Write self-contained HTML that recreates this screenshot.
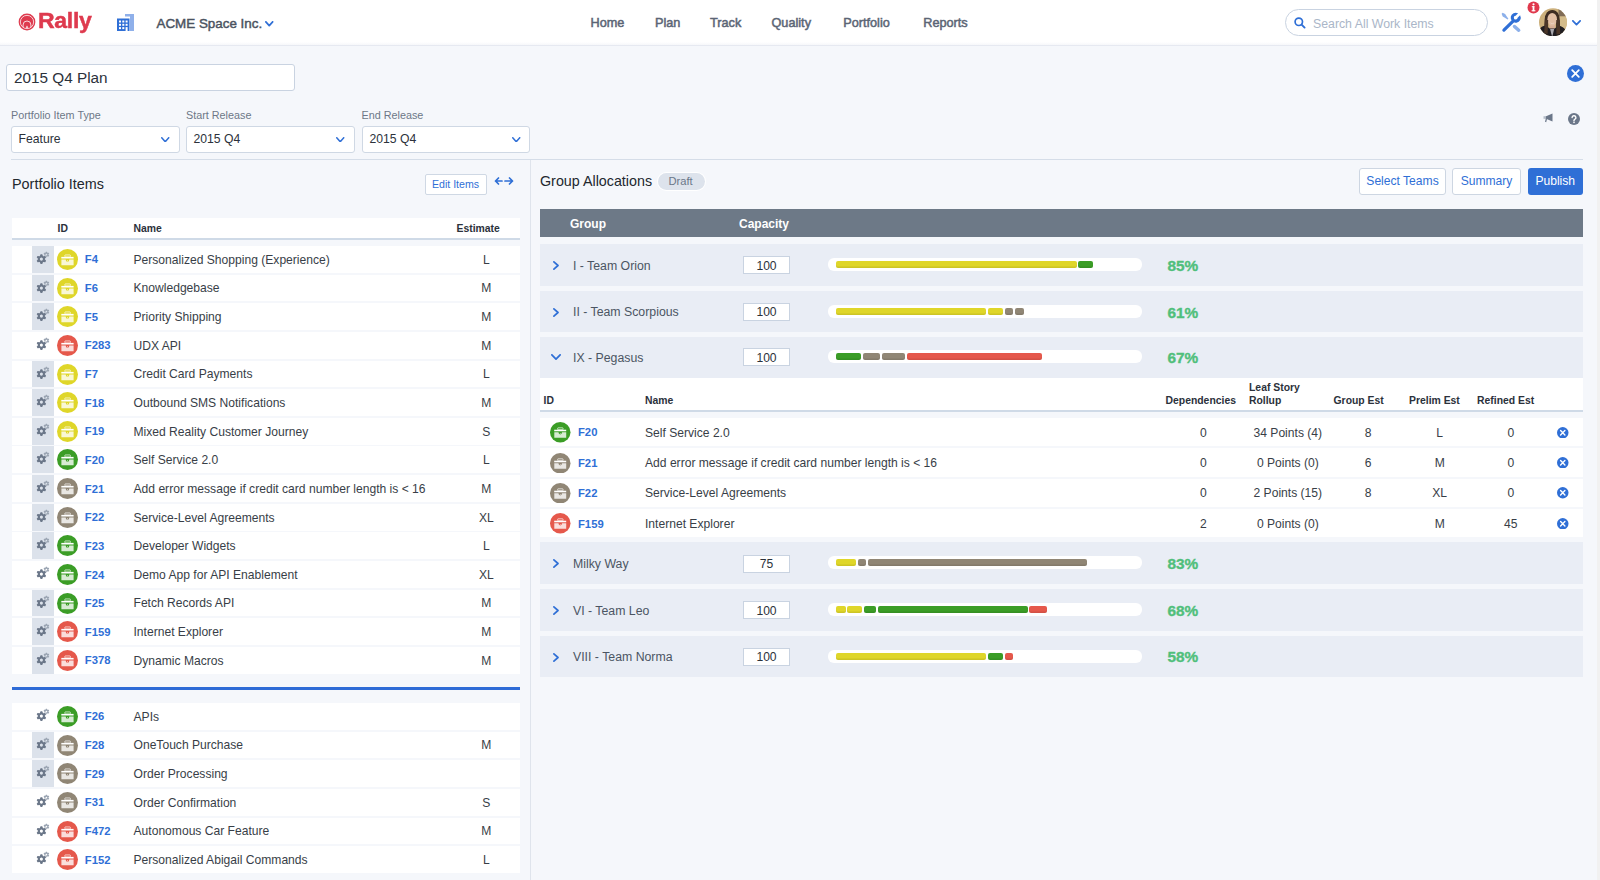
<!DOCTYPE html>
<html><head><meta charset="utf-8"><title>Rally</title>
<style>
html,body{margin:0;padding:0;width:1600px;height:880px;overflow:hidden;background:#f5f7fb;font-family:"Liberation Sans", sans-serif;}
.t{position:absolute;white-space:nowrap;}
</style></head><body>
<div style="position:absolute;left:0px;top:0px;width:1597px;height:45px;background:#ffffff;"></div><div style="position:absolute;left:0px;top:42px;width:1597px;height:3px;background:linear-gradient(#ffffff,#f6f7fa);"></div><div style="position:absolute;left:0px;top:45px;width:1597px;height:1px;background:#e6e9f1;"></div><div style="position:absolute;left:1597px;top:0px;width:3px;height:880px;background:#f1f1f1;"></div><svg style="position:absolute;left:18px;top:12.5px;" width="18" height="18" viewBox="0 0 18 18"><circle cx="9" cy="9" r="8.4" fill="#de3a4e"/><circle cx="9" cy="9" r="6.65" fill="none" stroke="#fff" stroke-width="0.75"/><path d="M3.4 12.2 A5.9 5.9 0 0 1 14.6 12.2 L12.9 13.6 A4.2 4.2 0 0 0 5.1 13.6 Z" fill="#fff" opacity="0"/><path d="M5.1 14.2 L5.1 11.9 A3.9 3.9 0 0 1 12.9 11.9 L12.9 14.2" fill="none" stroke="#fff" stroke-width="0.8"/><path d="M7.8 14.8 L9 12.4 L10.2 14.8 Z" fill="#fff"/></svg><div class="t" style="left:37.6px;top:8.4px;font-size:22.6px;line-height:26px;color:#de3a4e;font-weight:700;-webkit-text-stroke:0.5px #de3a4e;transform-origin:0 0;transform:scaleX(1.02);letter-spacing:-0.3px">Rally</div><svg style="position:absolute;left:117px;top:14px;" width="18" height="18" viewBox="0 0 18 18"><rect x="13" y="0" width="4" height="17" fill="#8fb0ea"/><rect x="8" y="0" width="9" height="2.5" fill="#8fb0ea"/><rect x="0" y="4.5" width="12.5" height="12.5" fill="#2f6fd6"/><g fill="#fff"><rect x="2" y="6.5" width="2" height="2"/><rect x="5.3" y="6.5" width="2" height="2"/><rect x="8.6" y="6.5" width="2" height="2"/><rect x="2" y="9.8" width="2" height="2"/><rect x="5.3" y="9.8" width="2" height="2"/><rect x="8.6" y="9.8" width="2" height="2"/><rect x="2" y="13.1" width="2" height="2"/><rect x="5.3" y="13.1" width="2" height="2"/><rect x="8.6" y="13.1" width="2" height="4"/></g></svg><div class="t" style="left:156.50px;top:16.66px;font-size:13.4px;line-height:13.4px;color:#4b5361;font-weight:400;-webkit-text-stroke:0.45px #4b5361;">ACME Space Inc.</div><svg style="position:absolute;left:265px;top:21px;" width="8.5" height="5.5" viewBox="0 0 8.5 5.5"><polyline points="0.85,0.85 4.25,4.65 7.65,0.85" fill="none" stroke="#2f6fd6" stroke-width="1.7" stroke-linecap="round" stroke-linejoin="round"/></svg><div class="t" style="left:590.50px;top:16.75px;font-size:12.7px;line-height:12.7px;color:#5b6575;font-weight:400;-webkit-text-stroke:0.5px #5b6575;">Home</div><div class="t" style="left:655.00px;top:16.75px;font-size:12.7px;line-height:12.7px;color:#5b6575;font-weight:400;-webkit-text-stroke:0.5px #5b6575;">Plan</div><div class="t" style="left:710.00px;top:16.75px;font-size:12.7px;line-height:12.7px;color:#5b6575;font-weight:400;-webkit-text-stroke:0.5px #5b6575;">Track</div><div class="t" style="left:771.50px;top:16.75px;font-size:12.7px;line-height:12.7px;color:#5b6575;font-weight:400;-webkit-text-stroke:0.5px #5b6575;">Quality</div><div class="t" style="left:843.25px;top:16.75px;font-size:12.7px;line-height:12.7px;color:#5b6575;font-weight:400;-webkit-text-stroke:0.5px #5b6575;">Portfolio</div><div class="t" style="left:923.25px;top:16.75px;font-size:12.7px;line-height:12.7px;color:#5b6575;font-weight:400;-webkit-text-stroke:0.5px #5b6575;">Reports</div><div style="position:absolute;left:1285px;top:9px;width:201px;height:25px;border:1px solid #c9d3e1;border-radius:14px;background:#fff"></div><svg style="position:absolute;left:1294px;top:17px;" width="12" height="12" viewBox="0 0 12 12"><circle cx="4.8" cy="4.8" r="3.7" fill="none" stroke="#2f6fd6" stroke-width="1.7"/><line x1="7.6" y1="7.6" x2="10.6" y2="10.6" stroke="#2f6fd6" stroke-width="1.9" stroke-linecap="round"/></svg><div class="t" style="left:1313.00px;top:17.69px;font-size:12.3px;line-height:12.3px;color:#aab6c8;font-weight:400;">Search All Work Items</div><svg style="position:absolute;left:1498px;top:9px;" width="28" height="28" viewBox="0 0 28 28"><path d="M16.5 17.5 L20.7 21.2" stroke="#8cb0ea" stroke-width="3.5" stroke-linecap="round"/><polygon points="4.59,3.81 7.18,4.90 8.24,6.67 10.39,9.74 9.54,10.59 6.47,8.44 4.70,7.38 3.61,4.79" fill="#8cb0ea"/><path d="M5.9 21.1 L14.8 12.4" stroke="#2f6fd6" stroke-width="3.2" stroke-linecap="round"/><path d="M22.08 6.30 A5.0 5.0 0 1 1 20.10 4.32 L17.62 6.80 A1.9 1.9 0 1 0 19.60 8.78 Z" fill="#2f6fd6"/></svg><svg style="position:absolute;left:1527px;top:1px;" width="13" height="13" viewBox="0 0 13 13"><circle cx="6.5" cy="6.5" r="6" fill="#e0384c"/><rect x="5.6" y="5.2" width="1.8" height="5" fill="#fff"/><rect x="4.6" y="9.2" width="3.8" height="1.1" fill="#fff"/><rect x="4.8" y="5.2" width="2.6" height="1" fill="#fff"/><circle cx="6.5" cy="3.3" r="1.1" fill="#fff"/></svg><svg style="position:absolute;left:1538.8px;top:8.2px;filter:blur(0.35px)" width="28" height="28" viewBox="0 0 28 28"><defs><clipPath id="av"><circle cx="14" cy="14.3" r="14"/></clipPath></defs><g clip-path="url(#av)"><rect x="-2" y="-2" width="32" height="32" fill="#ccb07c"/><rect x="19.5" y="0" width="8" height="8.5" fill="#7f6b56"/><rect x="20" y="8.5" width="9" height="12" fill="#d3bb8a"/><path d="M5 26 L5.6 12 Q6.2 2 13.3 2 Q20.2 2 20.8 12 L21.4 27 L17 27 L17.2 12 L9.2 12 L9 26 Z" fill="#3e2d23"/><rect x="10.4" y="15" width="5.6" height="7" fill="#d9b198"/><ellipse cx="13.2" cy="11.4" rx="4.8" ry="6.4" fill="#e2bfa5"/><path d="M8.4 9.5 Q8.8 4.4 13.3 4.3 Q17.9 4.4 18.2 10 L18.8 7 Q18 2.6 13.3 2.6 Q8.6 2.7 8 7 Z" fill="#3e2d23"/><path d="M11 14.6 Q13.2 16.2 15.5 14.6 Q13.2 17 11 14.6 Z" fill="#f6ebe6"/><path d="M-1 30 L0.5 21.5 Q2 18 6.8 17.5 L10.6 20.5 L15.8 20.5 L19.6 17.5 Q24.5 18.5 26.5 22 L29 30 Z" fill="#201d21"/><path d="M11.1 21 L13.2 29 L15.2 21 Z" fill="#a9a8ae"/><path d="M6 12 L5.2 25 L8.6 26 L9.2 12 Z" fill="#4b3628"/><path d="M17.3 12 L17.4 26.5 L21.3 26 L20.6 12 Z" fill="#4b3628"/></g></svg><svg style="position:absolute;left:1572px;top:20px;" width="9" height="5.5" viewBox="0 0 9 5.5"><polyline points="0.85,0.85 4.5,4.65 8.15,0.85" fill="none" stroke="#2f6fd6" stroke-width="1.7" stroke-linecap="round" stroke-linejoin="round"/></svg><div style="position:absolute;left:0px;top:46px;width:1597px;height:834px;background:#f5f7fb;"></div><div style="position:absolute;left:6px;top:64px;width:287px;height:25px;border:1px solid #c9d3e1;border-radius:3px;background:#fff"></div><div class="t" style="left:14.00px;top:70.05px;font-size:15.3px;line-height:15.3px;color:#2c323b;font-weight:400;">2015 Q4 Plan</div><svg style="position:absolute;left:1567px;top:65px;" width="17" height="17" viewBox="0 0 17 17"><circle cx="8.5" cy="8.5" r="8.5" fill="#2f6fd6"/><path d="M5.2 5.2 L11.8 11.8 M11.8 5.2 L5.2 11.8" stroke="#fff" stroke-width="1.8" stroke-linecap="round"/></svg><svg style="position:absolute;left:1543px;top:113px;" width="11" height="10" viewBox="0 0 11 10"><path d="M2.5 3.5 L9.5 0.5 L9.5 8.5 L2.5 5.5 Z" fill="#6b7789"/><rect x="0.5" y="3.2" width="2.4" height="2.6" fill="#b5bdc9"/><path d="M3.5 5.5 L2.6 9" stroke="#6b7789" stroke-width="1.2"/></svg><svg style="position:absolute;left:1568px;top:113px;" width="12" height="12" viewBox="0 0 12 12"><circle cx="6" cy="6" r="6" fill="#6b7789"/><path d="M4.1 4.6 a1.9 1.9 0 1 1 2.6 1.8 q-0.7 0.3 -0.7 1.2 v0.3" fill="none" stroke="#fff" stroke-width="1.4" stroke-linecap="round"/><circle cx="6" cy="9.5" r="0.8" fill="#fff"/></svg><div class="t" style="left:11.00px;top:109.61px;font-size:10.8px;line-height:10.8px;color:#6d7787;font-weight:400;">Portfolio Item Type</div><div class="t" style="left:186.00px;top:109.61px;font-size:10.8px;line-height:10.8px;color:#6d7787;font-weight:400;">Start Release</div><div class="t" style="left:361.50px;top:109.61px;font-size:10.8px;line-height:10.8px;color:#6d7787;font-weight:400;">End Release</div><div style="position:absolute;left:11px;top:125.6px;width:167px;height:25px;border:1px solid #cfd8e4;border-radius:3px;background:#fff"></div><div class="t" style="left:18.50px;top:133.07px;font-size:12.2px;line-height:12.2px;color:#2c323b;font-weight:400;">Feature</div><svg style="position:absolute;left:161px;top:136.5px;" width="8.5" height="5.5" viewBox="0 0 8.5 5.5"><polyline points="0.75,0.75 4.25,4.75 7.75,0.75" fill="none" stroke="#2f6fd6" stroke-width="1.5" stroke-linecap="round" stroke-linejoin="round"/></svg><div style="position:absolute;left:186px;top:125.6px;width:167px;height:25px;border:1px solid #cfd8e4;border-radius:3px;background:#fff"></div><div class="t" style="left:193.50px;top:133.07px;font-size:12.2px;line-height:12.2px;color:#2c323b;font-weight:400;">2015 Q4</div><svg style="position:absolute;left:336px;top:136.5px;" width="8.5" height="5.5" viewBox="0 0 8.5 5.5"><polyline points="0.75,0.75 4.25,4.75 7.75,0.75" fill="none" stroke="#2f6fd6" stroke-width="1.5" stroke-linecap="round" stroke-linejoin="round"/></svg><div style="position:absolute;left:362px;top:125.6px;width:166px;height:25px;border:1px solid #cfd8e4;border-radius:3px;background:#fff"></div><div class="t" style="left:369.50px;top:133.07px;font-size:12.2px;line-height:12.2px;color:#2c323b;font-weight:400;">2015 Q4</div><svg style="position:absolute;left:512px;top:136.5px;" width="8.5" height="5.5" viewBox="0 0 8.5 5.5"><polyline points="0.75,0.75 4.25,4.75 7.75,0.75" fill="none" stroke="#2f6fd6" stroke-width="1.5" stroke-linecap="round" stroke-linejoin="round"/></svg><div style="position:absolute;left:11px;top:159px;width:1572px;height:1px;background:#d5dde8;"></div><div style="position:absolute;left:530px;top:160px;width:1px;height:720px;background:#dfe4ec;"></div><div class="t" style="left:12.00px;top:177.31px;font-size:14.4px;line-height:14.4px;color:#22272e;font-weight:400;">Portfolio Items</div><div style="position:absolute;left:425px;top:174px;width:60px;height:19px;border:1px solid #cfd8e4;border-radius:2px;background:#fff"></div><div class="t" style="left:155.50px;width:600px;text-align:center;top:179.03px;font-size:10.6px;line-height:10.6px;color:#2f6fd6;font-weight:400;">Edit Items</div><svg style="position:absolute;left:494px;top:176px;" width="20" height="10" viewBox="0 0 20 10"><path d="M1.5 5 H8 M1.5 5 L4.5 2 M1.5 5 L4.5 8" stroke="#2f6fd6" stroke-width="1.7" fill="none" stroke-linecap="round" stroke-linejoin="round"/><path d="M11 5 H18.5 M18.5 5 L15.5 2 M18.5 5 L15.5 8" stroke="#2f6fd6" stroke-width="1.7" fill="none" stroke-linecap="round" stroke-linejoin="round"/></svg><div style="position:absolute;left:12px;top:217.5px;width:508px;height:20px;background:#ffffff;"></div><div style="position:absolute;left:12px;top:237.5px;width:508px;height:2px;background:#cfdae7;"></div><div class="t" style="left:57.50px;top:223.80px;font-size:10.4px;line-height:10.4px;color:#2b313b;font-weight:700;">ID</div><div class="t" style="left:133.50px;top:223.80px;font-size:10.4px;line-height:10.4px;color:#2b313b;font-weight:700;">Name</div><div class="t" style="left:456.50px;top:223.80px;font-size:10.4px;line-height:10.4px;color:#2b313b;font-weight:700;">Estimate</div><svg width="0" height="0" style="position:absolute"><defs><g id="bc"><rect x="-2.65" y="-4.55" width="5.5" height="2.0" rx="0.5" fill="none" stroke="#fff" stroke-width="0.85" opacity="0.8"/><rect x="-6.2" y="-2.6" width="12.3" height="1.6" fill="#fff"/><path d="M-6.1 0 H-1.8 A1.8 2.2 0 0 0 1.8 0 H6.1 V5.7 H-6.1 Z" fill="#fff" opacity="0.8"/><circle cx="0" cy="1.2" r="0.5" fill="#fff" opacity="0.9"/></g></defs></svg><div style="position:absolute;left:12px;top:246.0px;width:508px;height:26.8px;background:#ffffff;"></div><div style="position:absolute;left:32px;top:246.0px;width:22px;height:26.8px;background:#dce2eb;"></div><svg style="position:absolute;left:33.00px;top:249.00px" width="20" height="20" viewBox="0 0 20 20"><path d="M12.40 3.87 L12.90 2.64 L13.90 2.64 L14.40 3.87 L14.40 3.87 L15.71 3.69 L16.21 4.55 L15.40 5.60 L15.40 5.60 L16.21 6.65 L15.71 7.51 L14.40 7.33 L14.40 7.33 L13.90 8.56 L12.90 8.56 L12.40 7.33 L12.40 7.33 L11.09 7.51 L10.59 6.65 L11.40 5.60 L11.40 5.60 L10.59 4.55 L11.09 3.69 L12.40 3.87 Z M14.30 5.60 A0.9 0.9 0 1 0 12.50 5.60 A0.9 0.9 0 1 0 14.30 5.60 Z" fill="#9aa4b2" fill-rule="evenodd"/><path d="M6.75 7.24 L7.57 5.17 L9.23 5.17 L10.05 7.24 L10.05 7.24 L12.25 6.91 L13.09 8.36 L11.70 10.10 L11.70 10.10 L13.09 11.84 L12.25 13.29 L10.05 12.96 L10.05 12.96 L9.23 15.03 L7.57 15.03 L6.75 12.96 L6.75 12.96 L4.55 13.29 L3.71 11.84 L5.10 10.10 L5.10 10.10 L3.71 8.36 L4.55 6.91 L6.75 7.24 Z M9.95 10.10 A1.55 1.55 0 1 0 6.85 10.10 A1.55 1.55 0 1 0 9.95 10.10 Z" fill="#6b7789" fill-rule="evenodd" stroke="#dce2eb" stroke-width="1.1" paint-order="stroke"/></svg><svg style="position:absolute;left:56.90px;top:249.00px" width="21" height="21" viewBox="-10.5 -10.5 21 21"><circle r="10.5" fill="#dfd629"/><use href="#bc"/></svg><div class="t" style="left:84.80px;top:254.48px;font-size:11.25px;line-height:11.25px;color:#2f6fd6;font-weight:700;">F4</div><div class="t" style="left:133.50px;top:253.76px;font-size:12.1px;line-height:12.1px;color:#383e47;font-weight:400;">Personalized Shopping (Experience)</div><div class="t" style="left:186.40px;width:600px;text-align:center;top:253.76px;font-size:12.1px;line-height:12.1px;color:#383e47;font-weight:400;">L</div><div style="position:absolute;left:12px;top:274.64px;width:508px;height:26.8px;background:#ffffff;"></div><div style="position:absolute;left:32px;top:274.64px;width:22px;height:26.8px;background:#dce2eb;"></div><svg style="position:absolute;left:33.00px;top:277.64px" width="20" height="20" viewBox="0 0 20 20"><path d="M12.40 3.87 L12.90 2.64 L13.90 2.64 L14.40 3.87 L14.40 3.87 L15.71 3.69 L16.21 4.55 L15.40 5.60 L15.40 5.60 L16.21 6.65 L15.71 7.51 L14.40 7.33 L14.40 7.33 L13.90 8.56 L12.90 8.56 L12.40 7.33 L12.40 7.33 L11.09 7.51 L10.59 6.65 L11.40 5.60 L11.40 5.60 L10.59 4.55 L11.09 3.69 L12.40 3.87 Z M14.30 5.60 A0.9 0.9 0 1 0 12.50 5.60 A0.9 0.9 0 1 0 14.30 5.60 Z" fill="#9aa4b2" fill-rule="evenodd"/><path d="M6.75 7.24 L7.57 5.17 L9.23 5.17 L10.05 7.24 L10.05 7.24 L12.25 6.91 L13.09 8.36 L11.70 10.10 L11.70 10.10 L13.09 11.84 L12.25 13.29 L10.05 12.96 L10.05 12.96 L9.23 15.03 L7.57 15.03 L6.75 12.96 L6.75 12.96 L4.55 13.29 L3.71 11.84 L5.10 10.10 L5.10 10.10 L3.71 8.36 L4.55 6.91 L6.75 7.24 Z M9.95 10.10 A1.55 1.55 0 1 0 6.85 10.10 A1.55 1.55 0 1 0 9.95 10.10 Z" fill="#6b7789" fill-rule="evenodd" stroke="#dce2eb" stroke-width="1.1" paint-order="stroke"/></svg><svg style="position:absolute;left:56.90px;top:277.64px" width="21" height="21" viewBox="-10.5 -10.5 21 21"><circle r="10.5" fill="#dfd629"/><use href="#bc"/></svg><div class="t" style="left:84.80px;top:283.12px;font-size:11.25px;line-height:11.25px;color:#2f6fd6;font-weight:700;">F6</div><div class="t" style="left:133.50px;top:282.40px;font-size:12.1px;line-height:12.1px;color:#383e47;font-weight:400;">Knowledgebase</div><div class="t" style="left:186.40px;width:600px;text-align:center;top:282.40px;font-size:12.1px;line-height:12.1px;color:#383e47;font-weight:400;">M</div><div style="position:absolute;left:12px;top:303.28px;width:508px;height:26.8px;background:#ffffff;"></div><div style="position:absolute;left:32px;top:303.28px;width:22px;height:26.8px;background:#dce2eb;"></div><svg style="position:absolute;left:33.00px;top:306.28px" width="20" height="20" viewBox="0 0 20 20"><path d="M12.40 3.87 L12.90 2.64 L13.90 2.64 L14.40 3.87 L14.40 3.87 L15.71 3.69 L16.21 4.55 L15.40 5.60 L15.40 5.60 L16.21 6.65 L15.71 7.51 L14.40 7.33 L14.40 7.33 L13.90 8.56 L12.90 8.56 L12.40 7.33 L12.40 7.33 L11.09 7.51 L10.59 6.65 L11.40 5.60 L11.40 5.60 L10.59 4.55 L11.09 3.69 L12.40 3.87 Z M14.30 5.60 A0.9 0.9 0 1 0 12.50 5.60 A0.9 0.9 0 1 0 14.30 5.60 Z" fill="#9aa4b2" fill-rule="evenodd"/><path d="M6.75 7.24 L7.57 5.17 L9.23 5.17 L10.05 7.24 L10.05 7.24 L12.25 6.91 L13.09 8.36 L11.70 10.10 L11.70 10.10 L13.09 11.84 L12.25 13.29 L10.05 12.96 L10.05 12.96 L9.23 15.03 L7.57 15.03 L6.75 12.96 L6.75 12.96 L4.55 13.29 L3.71 11.84 L5.10 10.10 L5.10 10.10 L3.71 8.36 L4.55 6.91 L6.75 7.24 Z M9.95 10.10 A1.55 1.55 0 1 0 6.85 10.10 A1.55 1.55 0 1 0 9.95 10.10 Z" fill="#6b7789" fill-rule="evenodd" stroke="#dce2eb" stroke-width="1.1" paint-order="stroke"/></svg><svg style="position:absolute;left:56.90px;top:306.28px" width="21" height="21" viewBox="-10.5 -10.5 21 21"><circle r="10.5" fill="#dfd629"/><use href="#bc"/></svg><div class="t" style="left:84.80px;top:311.76px;font-size:11.25px;line-height:11.25px;color:#2f6fd6;font-weight:700;">F5</div><div class="t" style="left:133.50px;top:311.04px;font-size:12.1px;line-height:12.1px;color:#383e47;font-weight:400;">Priority Shipping</div><div class="t" style="left:186.40px;width:600px;text-align:center;top:311.04px;font-size:12.1px;line-height:12.1px;color:#383e47;font-weight:400;">M</div><div style="position:absolute;left:12px;top:331.92px;width:508px;height:26.8px;background:#ffffff;"></div><svg style="position:absolute;left:33.00px;top:334.92px" width="20" height="20" viewBox="0 0 20 20"><path d="M12.40 3.87 L12.90 2.64 L13.90 2.64 L14.40 3.87 L14.40 3.87 L15.71 3.69 L16.21 4.55 L15.40 5.60 L15.40 5.60 L16.21 6.65 L15.71 7.51 L14.40 7.33 L14.40 7.33 L13.90 8.56 L12.90 8.56 L12.40 7.33 L12.40 7.33 L11.09 7.51 L10.59 6.65 L11.40 5.60 L11.40 5.60 L10.59 4.55 L11.09 3.69 L12.40 3.87 Z M14.30 5.60 A0.9 0.9 0 1 0 12.50 5.60 A0.9 0.9 0 1 0 14.30 5.60 Z" fill="#9aa4b2" fill-rule="evenodd"/><path d="M6.75 7.24 L7.57 5.17 L9.23 5.17 L10.05 7.24 L10.05 7.24 L12.25 6.91 L13.09 8.36 L11.70 10.10 L11.70 10.10 L13.09 11.84 L12.25 13.29 L10.05 12.96 L10.05 12.96 L9.23 15.03 L7.57 15.03 L6.75 12.96 L6.75 12.96 L4.55 13.29 L3.71 11.84 L5.10 10.10 L5.10 10.10 L3.71 8.36 L4.55 6.91 L6.75 7.24 Z M9.95 10.10 A1.55 1.55 0 1 0 6.85 10.10 A1.55 1.55 0 1 0 9.95 10.10 Z" fill="#6b7789" fill-rule="evenodd" stroke="#ffffff" stroke-width="1.1" paint-order="stroke"/></svg><svg style="position:absolute;left:56.90px;top:334.92px" width="21" height="21" viewBox="-10.5 -10.5 21 21"><circle r="10.5" fill="#e5584b"/><use href="#bc"/></svg><div class="t" style="left:84.80px;top:340.40px;font-size:11.25px;line-height:11.25px;color:#2f6fd6;font-weight:700;">F283</div><div class="t" style="left:133.50px;top:339.68px;font-size:12.1px;line-height:12.1px;color:#383e47;font-weight:400;">UDX API</div><div class="t" style="left:186.40px;width:600px;text-align:center;top:339.68px;font-size:12.1px;line-height:12.1px;color:#383e47;font-weight:400;">M</div><div style="position:absolute;left:12px;top:360.56px;width:508px;height:26.8px;background:#ffffff;"></div><div style="position:absolute;left:32px;top:360.56px;width:22px;height:26.8px;background:#dce2eb;"></div><svg style="position:absolute;left:33.00px;top:363.56px" width="20" height="20" viewBox="0 0 20 20"><path d="M12.40 3.87 L12.90 2.64 L13.90 2.64 L14.40 3.87 L14.40 3.87 L15.71 3.69 L16.21 4.55 L15.40 5.60 L15.40 5.60 L16.21 6.65 L15.71 7.51 L14.40 7.33 L14.40 7.33 L13.90 8.56 L12.90 8.56 L12.40 7.33 L12.40 7.33 L11.09 7.51 L10.59 6.65 L11.40 5.60 L11.40 5.60 L10.59 4.55 L11.09 3.69 L12.40 3.87 Z M14.30 5.60 A0.9 0.9 0 1 0 12.50 5.60 A0.9 0.9 0 1 0 14.30 5.60 Z" fill="#9aa4b2" fill-rule="evenodd"/><path d="M6.75 7.24 L7.57 5.17 L9.23 5.17 L10.05 7.24 L10.05 7.24 L12.25 6.91 L13.09 8.36 L11.70 10.10 L11.70 10.10 L13.09 11.84 L12.25 13.29 L10.05 12.96 L10.05 12.96 L9.23 15.03 L7.57 15.03 L6.75 12.96 L6.75 12.96 L4.55 13.29 L3.71 11.84 L5.10 10.10 L5.10 10.10 L3.71 8.36 L4.55 6.91 L6.75 7.24 Z M9.95 10.10 A1.55 1.55 0 1 0 6.85 10.10 A1.55 1.55 0 1 0 9.95 10.10 Z" fill="#6b7789" fill-rule="evenodd" stroke="#dce2eb" stroke-width="1.1" paint-order="stroke"/></svg><svg style="position:absolute;left:56.90px;top:363.56px" width="21" height="21" viewBox="-10.5 -10.5 21 21"><circle r="10.5" fill="#dfd629"/><use href="#bc"/></svg><div class="t" style="left:84.80px;top:369.04px;font-size:11.25px;line-height:11.25px;color:#2f6fd6;font-weight:700;">F7</div><div class="t" style="left:133.50px;top:368.32px;font-size:12.1px;line-height:12.1px;color:#383e47;font-weight:400;">Credit Card Payments</div><div class="t" style="left:186.40px;width:600px;text-align:center;top:368.32px;font-size:12.1px;line-height:12.1px;color:#383e47;font-weight:400;">L</div><div style="position:absolute;left:12px;top:389.2px;width:508px;height:26.8px;background:#ffffff;"></div><div style="position:absolute;left:32px;top:389.2px;width:22px;height:26.8px;background:#dce2eb;"></div><svg style="position:absolute;left:33.00px;top:392.20px" width="20" height="20" viewBox="0 0 20 20"><path d="M12.40 3.87 L12.90 2.64 L13.90 2.64 L14.40 3.87 L14.40 3.87 L15.71 3.69 L16.21 4.55 L15.40 5.60 L15.40 5.60 L16.21 6.65 L15.71 7.51 L14.40 7.33 L14.40 7.33 L13.90 8.56 L12.90 8.56 L12.40 7.33 L12.40 7.33 L11.09 7.51 L10.59 6.65 L11.40 5.60 L11.40 5.60 L10.59 4.55 L11.09 3.69 L12.40 3.87 Z M14.30 5.60 A0.9 0.9 0 1 0 12.50 5.60 A0.9 0.9 0 1 0 14.30 5.60 Z" fill="#9aa4b2" fill-rule="evenodd"/><path d="M6.75 7.24 L7.57 5.17 L9.23 5.17 L10.05 7.24 L10.05 7.24 L12.25 6.91 L13.09 8.36 L11.70 10.10 L11.70 10.10 L13.09 11.84 L12.25 13.29 L10.05 12.96 L10.05 12.96 L9.23 15.03 L7.57 15.03 L6.75 12.96 L6.75 12.96 L4.55 13.29 L3.71 11.84 L5.10 10.10 L5.10 10.10 L3.71 8.36 L4.55 6.91 L6.75 7.24 Z M9.95 10.10 A1.55 1.55 0 1 0 6.85 10.10 A1.55 1.55 0 1 0 9.95 10.10 Z" fill="#6b7789" fill-rule="evenodd" stroke="#dce2eb" stroke-width="1.1" paint-order="stroke"/></svg><svg style="position:absolute;left:56.90px;top:392.20px" width="21" height="21" viewBox="-10.5 -10.5 21 21"><circle r="10.5" fill="#dfd629"/><use href="#bc"/></svg><div class="t" style="left:84.80px;top:397.68px;font-size:11.25px;line-height:11.25px;color:#2f6fd6;font-weight:700;">F18</div><div class="t" style="left:133.50px;top:396.96px;font-size:12.1px;line-height:12.1px;color:#383e47;font-weight:400;">Outbound SMS Notifications</div><div class="t" style="left:186.40px;width:600px;text-align:center;top:396.96px;font-size:12.1px;line-height:12.1px;color:#383e47;font-weight:400;">M</div><div style="position:absolute;left:12px;top:417.84px;width:508px;height:26.8px;background:#ffffff;"></div><div style="position:absolute;left:32px;top:417.84px;width:22px;height:26.8px;background:#dce2eb;"></div><svg style="position:absolute;left:33.00px;top:420.84px" width="20" height="20" viewBox="0 0 20 20"><path d="M12.40 3.87 L12.90 2.64 L13.90 2.64 L14.40 3.87 L14.40 3.87 L15.71 3.69 L16.21 4.55 L15.40 5.60 L15.40 5.60 L16.21 6.65 L15.71 7.51 L14.40 7.33 L14.40 7.33 L13.90 8.56 L12.90 8.56 L12.40 7.33 L12.40 7.33 L11.09 7.51 L10.59 6.65 L11.40 5.60 L11.40 5.60 L10.59 4.55 L11.09 3.69 L12.40 3.87 Z M14.30 5.60 A0.9 0.9 0 1 0 12.50 5.60 A0.9 0.9 0 1 0 14.30 5.60 Z" fill="#9aa4b2" fill-rule="evenodd"/><path d="M6.75 7.24 L7.57 5.17 L9.23 5.17 L10.05 7.24 L10.05 7.24 L12.25 6.91 L13.09 8.36 L11.70 10.10 L11.70 10.10 L13.09 11.84 L12.25 13.29 L10.05 12.96 L10.05 12.96 L9.23 15.03 L7.57 15.03 L6.75 12.96 L6.75 12.96 L4.55 13.29 L3.71 11.84 L5.10 10.10 L5.10 10.10 L3.71 8.36 L4.55 6.91 L6.75 7.24 Z M9.95 10.10 A1.55 1.55 0 1 0 6.85 10.10 A1.55 1.55 0 1 0 9.95 10.10 Z" fill="#6b7789" fill-rule="evenodd" stroke="#dce2eb" stroke-width="1.1" paint-order="stroke"/></svg><svg style="position:absolute;left:56.90px;top:420.84px" width="21" height="21" viewBox="-10.5 -10.5 21 21"><circle r="10.5" fill="#dfd629"/><use href="#bc"/></svg><div class="t" style="left:84.80px;top:426.32px;font-size:11.25px;line-height:11.25px;color:#2f6fd6;font-weight:700;">F19</div><div class="t" style="left:133.50px;top:425.60px;font-size:12.1px;line-height:12.1px;color:#383e47;font-weight:400;">Mixed Reality Customer Journey</div><div class="t" style="left:186.40px;width:600px;text-align:center;top:425.60px;font-size:12.1px;line-height:12.1px;color:#383e47;font-weight:400;">S</div><div style="position:absolute;left:12px;top:446.48px;width:508px;height:26.8px;background:#ffffff;"></div><div style="position:absolute;left:32px;top:446.48px;width:22px;height:26.8px;background:#dce2eb;"></div><svg style="position:absolute;left:33.00px;top:449.48px" width="20" height="20" viewBox="0 0 20 20"><path d="M12.40 3.87 L12.90 2.64 L13.90 2.64 L14.40 3.87 L14.40 3.87 L15.71 3.69 L16.21 4.55 L15.40 5.60 L15.40 5.60 L16.21 6.65 L15.71 7.51 L14.40 7.33 L14.40 7.33 L13.90 8.56 L12.90 8.56 L12.40 7.33 L12.40 7.33 L11.09 7.51 L10.59 6.65 L11.40 5.60 L11.40 5.60 L10.59 4.55 L11.09 3.69 L12.40 3.87 Z M14.30 5.60 A0.9 0.9 0 1 0 12.50 5.60 A0.9 0.9 0 1 0 14.30 5.60 Z" fill="#9aa4b2" fill-rule="evenodd"/><path d="M6.75 7.24 L7.57 5.17 L9.23 5.17 L10.05 7.24 L10.05 7.24 L12.25 6.91 L13.09 8.36 L11.70 10.10 L11.70 10.10 L13.09 11.84 L12.25 13.29 L10.05 12.96 L10.05 12.96 L9.23 15.03 L7.57 15.03 L6.75 12.96 L6.75 12.96 L4.55 13.29 L3.71 11.84 L5.10 10.10 L5.10 10.10 L3.71 8.36 L4.55 6.91 L6.75 7.24 Z M9.95 10.10 A1.55 1.55 0 1 0 6.85 10.10 A1.55 1.55 0 1 0 9.95 10.10 Z" fill="#6b7789" fill-rule="evenodd" stroke="#dce2eb" stroke-width="1.1" paint-order="stroke"/></svg><svg style="position:absolute;left:56.90px;top:449.48px" width="21" height="21" viewBox="-10.5 -10.5 21 21"><circle r="10.5" fill="#3b9d26"/><use href="#bc"/></svg><div class="t" style="left:84.80px;top:454.96px;font-size:11.25px;line-height:11.25px;color:#2f6fd6;font-weight:700;">F20</div><div class="t" style="left:133.50px;top:454.24px;font-size:12.1px;line-height:12.1px;color:#383e47;font-weight:400;">Self Service 2.0</div><div class="t" style="left:186.40px;width:600px;text-align:center;top:454.24px;font-size:12.1px;line-height:12.1px;color:#383e47;font-weight:400;">L</div><div style="position:absolute;left:12px;top:475.12px;width:508px;height:26.8px;background:#ffffff;"></div><div style="position:absolute;left:32px;top:475.12px;width:22px;height:26.8px;background:#dce2eb;"></div><svg style="position:absolute;left:33.00px;top:478.12px" width="20" height="20" viewBox="0 0 20 20"><path d="M12.40 3.87 L12.90 2.64 L13.90 2.64 L14.40 3.87 L14.40 3.87 L15.71 3.69 L16.21 4.55 L15.40 5.60 L15.40 5.60 L16.21 6.65 L15.71 7.51 L14.40 7.33 L14.40 7.33 L13.90 8.56 L12.90 8.56 L12.40 7.33 L12.40 7.33 L11.09 7.51 L10.59 6.65 L11.40 5.60 L11.40 5.60 L10.59 4.55 L11.09 3.69 L12.40 3.87 Z M14.30 5.60 A0.9 0.9 0 1 0 12.50 5.60 A0.9 0.9 0 1 0 14.30 5.60 Z" fill="#9aa4b2" fill-rule="evenodd"/><path d="M6.75 7.24 L7.57 5.17 L9.23 5.17 L10.05 7.24 L10.05 7.24 L12.25 6.91 L13.09 8.36 L11.70 10.10 L11.70 10.10 L13.09 11.84 L12.25 13.29 L10.05 12.96 L10.05 12.96 L9.23 15.03 L7.57 15.03 L6.75 12.96 L6.75 12.96 L4.55 13.29 L3.71 11.84 L5.10 10.10 L5.10 10.10 L3.71 8.36 L4.55 6.91 L6.75 7.24 Z M9.95 10.10 A1.55 1.55 0 1 0 6.85 10.10 A1.55 1.55 0 1 0 9.95 10.10 Z" fill="#6b7789" fill-rule="evenodd" stroke="#dce2eb" stroke-width="1.1" paint-order="stroke"/></svg><svg style="position:absolute;left:56.90px;top:478.12px" width="21" height="21" viewBox="-10.5 -10.5 21 21"><circle r="10.5" fill="#908675"/><use href="#bc"/></svg><div class="t" style="left:84.80px;top:483.60px;font-size:11.25px;line-height:11.25px;color:#2f6fd6;font-weight:700;">F21</div><div class="t" style="left:133.50px;top:482.88px;font-size:12.1px;line-height:12.1px;color:#383e47;font-weight:400;">Add error message if credit card number length is &lt; 16</div><div class="t" style="left:186.40px;width:600px;text-align:center;top:482.88px;font-size:12.1px;line-height:12.1px;color:#383e47;font-weight:400;">M</div><div style="position:absolute;left:12px;top:503.76px;width:508px;height:26.8px;background:#ffffff;"></div><div style="position:absolute;left:32px;top:503.76px;width:22px;height:26.8px;background:#dce2eb;"></div><svg style="position:absolute;left:33.00px;top:506.76px" width="20" height="20" viewBox="0 0 20 20"><path d="M12.40 3.87 L12.90 2.64 L13.90 2.64 L14.40 3.87 L14.40 3.87 L15.71 3.69 L16.21 4.55 L15.40 5.60 L15.40 5.60 L16.21 6.65 L15.71 7.51 L14.40 7.33 L14.40 7.33 L13.90 8.56 L12.90 8.56 L12.40 7.33 L12.40 7.33 L11.09 7.51 L10.59 6.65 L11.40 5.60 L11.40 5.60 L10.59 4.55 L11.09 3.69 L12.40 3.87 Z M14.30 5.60 A0.9 0.9 0 1 0 12.50 5.60 A0.9 0.9 0 1 0 14.30 5.60 Z" fill="#9aa4b2" fill-rule="evenodd"/><path d="M6.75 7.24 L7.57 5.17 L9.23 5.17 L10.05 7.24 L10.05 7.24 L12.25 6.91 L13.09 8.36 L11.70 10.10 L11.70 10.10 L13.09 11.84 L12.25 13.29 L10.05 12.96 L10.05 12.96 L9.23 15.03 L7.57 15.03 L6.75 12.96 L6.75 12.96 L4.55 13.29 L3.71 11.84 L5.10 10.10 L5.10 10.10 L3.71 8.36 L4.55 6.91 L6.75 7.24 Z M9.95 10.10 A1.55 1.55 0 1 0 6.85 10.10 A1.55 1.55 0 1 0 9.95 10.10 Z" fill="#6b7789" fill-rule="evenodd" stroke="#dce2eb" stroke-width="1.1" paint-order="stroke"/></svg><svg style="position:absolute;left:56.90px;top:506.76px" width="21" height="21" viewBox="-10.5 -10.5 21 21"><circle r="10.5" fill="#908675"/><use href="#bc"/></svg><div class="t" style="left:84.80px;top:512.24px;font-size:11.25px;line-height:11.25px;color:#2f6fd6;font-weight:700;">F22</div><div class="t" style="left:133.50px;top:511.52px;font-size:12.1px;line-height:12.1px;color:#383e47;font-weight:400;">Service-Level Agreements</div><div class="t" style="left:186.40px;width:600px;text-align:center;top:511.52px;font-size:12.1px;line-height:12.1px;color:#383e47;font-weight:400;">XL</div><div style="position:absolute;left:12px;top:532.4px;width:508px;height:26.8px;background:#ffffff;"></div><div style="position:absolute;left:32px;top:532.4px;width:22px;height:26.8px;background:#dce2eb;"></div><svg style="position:absolute;left:33.00px;top:535.40px" width="20" height="20" viewBox="0 0 20 20"><path d="M12.40 3.87 L12.90 2.64 L13.90 2.64 L14.40 3.87 L14.40 3.87 L15.71 3.69 L16.21 4.55 L15.40 5.60 L15.40 5.60 L16.21 6.65 L15.71 7.51 L14.40 7.33 L14.40 7.33 L13.90 8.56 L12.90 8.56 L12.40 7.33 L12.40 7.33 L11.09 7.51 L10.59 6.65 L11.40 5.60 L11.40 5.60 L10.59 4.55 L11.09 3.69 L12.40 3.87 Z M14.30 5.60 A0.9 0.9 0 1 0 12.50 5.60 A0.9 0.9 0 1 0 14.30 5.60 Z" fill="#9aa4b2" fill-rule="evenodd"/><path d="M6.75 7.24 L7.57 5.17 L9.23 5.17 L10.05 7.24 L10.05 7.24 L12.25 6.91 L13.09 8.36 L11.70 10.10 L11.70 10.10 L13.09 11.84 L12.25 13.29 L10.05 12.96 L10.05 12.96 L9.23 15.03 L7.57 15.03 L6.75 12.96 L6.75 12.96 L4.55 13.29 L3.71 11.84 L5.10 10.10 L5.10 10.10 L3.71 8.36 L4.55 6.91 L6.75 7.24 Z M9.95 10.10 A1.55 1.55 0 1 0 6.85 10.10 A1.55 1.55 0 1 0 9.95 10.10 Z" fill="#6b7789" fill-rule="evenodd" stroke="#dce2eb" stroke-width="1.1" paint-order="stroke"/></svg><svg style="position:absolute;left:56.90px;top:535.40px" width="21" height="21" viewBox="-10.5 -10.5 21 21"><circle r="10.5" fill="#3b9d26"/><use href="#bc"/></svg><div class="t" style="left:84.80px;top:540.88px;font-size:11.25px;line-height:11.25px;color:#2f6fd6;font-weight:700;">F23</div><div class="t" style="left:133.50px;top:540.16px;font-size:12.1px;line-height:12.1px;color:#383e47;font-weight:400;">Developer Widgets</div><div class="t" style="left:186.40px;width:600px;text-align:center;top:540.16px;font-size:12.1px;line-height:12.1px;color:#383e47;font-weight:400;">L</div><div style="position:absolute;left:12px;top:561.04px;width:508px;height:26.8px;background:#ffffff;"></div><svg style="position:absolute;left:33.00px;top:564.04px" width="20" height="20" viewBox="0 0 20 20"><path d="M12.40 3.87 L12.90 2.64 L13.90 2.64 L14.40 3.87 L14.40 3.87 L15.71 3.69 L16.21 4.55 L15.40 5.60 L15.40 5.60 L16.21 6.65 L15.71 7.51 L14.40 7.33 L14.40 7.33 L13.90 8.56 L12.90 8.56 L12.40 7.33 L12.40 7.33 L11.09 7.51 L10.59 6.65 L11.40 5.60 L11.40 5.60 L10.59 4.55 L11.09 3.69 L12.40 3.87 Z M14.30 5.60 A0.9 0.9 0 1 0 12.50 5.60 A0.9 0.9 0 1 0 14.30 5.60 Z" fill="#9aa4b2" fill-rule="evenodd"/><path d="M6.75 7.24 L7.57 5.17 L9.23 5.17 L10.05 7.24 L10.05 7.24 L12.25 6.91 L13.09 8.36 L11.70 10.10 L11.70 10.10 L13.09 11.84 L12.25 13.29 L10.05 12.96 L10.05 12.96 L9.23 15.03 L7.57 15.03 L6.75 12.96 L6.75 12.96 L4.55 13.29 L3.71 11.84 L5.10 10.10 L5.10 10.10 L3.71 8.36 L4.55 6.91 L6.75 7.24 Z M9.95 10.10 A1.55 1.55 0 1 0 6.85 10.10 A1.55 1.55 0 1 0 9.95 10.10 Z" fill="#6b7789" fill-rule="evenodd" stroke="#ffffff" stroke-width="1.1" paint-order="stroke"/></svg><svg style="position:absolute;left:56.90px;top:564.04px" width="21" height="21" viewBox="-10.5 -10.5 21 21"><circle r="10.5" fill="#3b9d26"/><use href="#bc"/></svg><div class="t" style="left:84.80px;top:569.52px;font-size:11.25px;line-height:11.25px;color:#2f6fd6;font-weight:700;">F24</div><div class="t" style="left:133.50px;top:568.80px;font-size:12.1px;line-height:12.1px;color:#383e47;font-weight:400;">Demo App for API Enablement</div><div class="t" style="left:186.40px;width:600px;text-align:center;top:568.80px;font-size:12.1px;line-height:12.1px;color:#383e47;font-weight:400;">XL</div><div style="position:absolute;left:12px;top:589.68px;width:508px;height:26.8px;background:#ffffff;"></div><div style="position:absolute;left:32px;top:589.68px;width:22px;height:26.8px;background:#dce2eb;"></div><svg style="position:absolute;left:33.00px;top:592.68px" width="20" height="20" viewBox="0 0 20 20"><path d="M12.40 3.87 L12.90 2.64 L13.90 2.64 L14.40 3.87 L14.40 3.87 L15.71 3.69 L16.21 4.55 L15.40 5.60 L15.40 5.60 L16.21 6.65 L15.71 7.51 L14.40 7.33 L14.40 7.33 L13.90 8.56 L12.90 8.56 L12.40 7.33 L12.40 7.33 L11.09 7.51 L10.59 6.65 L11.40 5.60 L11.40 5.60 L10.59 4.55 L11.09 3.69 L12.40 3.87 Z M14.30 5.60 A0.9 0.9 0 1 0 12.50 5.60 A0.9 0.9 0 1 0 14.30 5.60 Z" fill="#9aa4b2" fill-rule="evenodd"/><path d="M6.75 7.24 L7.57 5.17 L9.23 5.17 L10.05 7.24 L10.05 7.24 L12.25 6.91 L13.09 8.36 L11.70 10.10 L11.70 10.10 L13.09 11.84 L12.25 13.29 L10.05 12.96 L10.05 12.96 L9.23 15.03 L7.57 15.03 L6.75 12.96 L6.75 12.96 L4.55 13.29 L3.71 11.84 L5.10 10.10 L5.10 10.10 L3.71 8.36 L4.55 6.91 L6.75 7.24 Z M9.95 10.10 A1.55 1.55 0 1 0 6.85 10.10 A1.55 1.55 0 1 0 9.95 10.10 Z" fill="#6b7789" fill-rule="evenodd" stroke="#dce2eb" stroke-width="1.1" paint-order="stroke"/></svg><svg style="position:absolute;left:56.90px;top:592.68px" width="21" height="21" viewBox="-10.5 -10.5 21 21"><circle r="10.5" fill="#3b9d26"/><use href="#bc"/></svg><div class="t" style="left:84.80px;top:598.16px;font-size:11.25px;line-height:11.25px;color:#2f6fd6;font-weight:700;">F25</div><div class="t" style="left:133.50px;top:597.44px;font-size:12.1px;line-height:12.1px;color:#383e47;font-weight:400;">Fetch Records API</div><div class="t" style="left:186.40px;width:600px;text-align:center;top:597.44px;font-size:12.1px;line-height:12.1px;color:#383e47;font-weight:400;">M</div><div style="position:absolute;left:12px;top:618.32px;width:508px;height:26.8px;background:#ffffff;"></div><div style="position:absolute;left:32px;top:618.32px;width:22px;height:26.8px;background:#dce2eb;"></div><svg style="position:absolute;left:33.00px;top:621.32px" width="20" height="20" viewBox="0 0 20 20"><path d="M12.40 3.87 L12.90 2.64 L13.90 2.64 L14.40 3.87 L14.40 3.87 L15.71 3.69 L16.21 4.55 L15.40 5.60 L15.40 5.60 L16.21 6.65 L15.71 7.51 L14.40 7.33 L14.40 7.33 L13.90 8.56 L12.90 8.56 L12.40 7.33 L12.40 7.33 L11.09 7.51 L10.59 6.65 L11.40 5.60 L11.40 5.60 L10.59 4.55 L11.09 3.69 L12.40 3.87 Z M14.30 5.60 A0.9 0.9 0 1 0 12.50 5.60 A0.9 0.9 0 1 0 14.30 5.60 Z" fill="#9aa4b2" fill-rule="evenodd"/><path d="M6.75 7.24 L7.57 5.17 L9.23 5.17 L10.05 7.24 L10.05 7.24 L12.25 6.91 L13.09 8.36 L11.70 10.10 L11.70 10.10 L13.09 11.84 L12.25 13.29 L10.05 12.96 L10.05 12.96 L9.23 15.03 L7.57 15.03 L6.75 12.96 L6.75 12.96 L4.55 13.29 L3.71 11.84 L5.10 10.10 L5.10 10.10 L3.71 8.36 L4.55 6.91 L6.75 7.24 Z M9.95 10.10 A1.55 1.55 0 1 0 6.85 10.10 A1.55 1.55 0 1 0 9.95 10.10 Z" fill="#6b7789" fill-rule="evenodd" stroke="#dce2eb" stroke-width="1.1" paint-order="stroke"/></svg><svg style="position:absolute;left:56.90px;top:621.32px" width="21" height="21" viewBox="-10.5 -10.5 21 21"><circle r="10.5" fill="#e5584b"/><use href="#bc"/></svg><div class="t" style="left:84.80px;top:626.80px;font-size:11.25px;line-height:11.25px;color:#2f6fd6;font-weight:700;">F159</div><div class="t" style="left:133.50px;top:626.08px;font-size:12.1px;line-height:12.1px;color:#383e47;font-weight:400;">Internet Explorer</div><div class="t" style="left:186.40px;width:600px;text-align:center;top:626.08px;font-size:12.1px;line-height:12.1px;color:#383e47;font-weight:400;">M</div><div style="position:absolute;left:12px;top:646.96px;width:508px;height:26.8px;background:#ffffff;"></div><div style="position:absolute;left:32px;top:646.96px;width:22px;height:26.8px;background:#dce2eb;"></div><svg style="position:absolute;left:33.00px;top:649.96px" width="20" height="20" viewBox="0 0 20 20"><path d="M12.40 3.87 L12.90 2.64 L13.90 2.64 L14.40 3.87 L14.40 3.87 L15.71 3.69 L16.21 4.55 L15.40 5.60 L15.40 5.60 L16.21 6.65 L15.71 7.51 L14.40 7.33 L14.40 7.33 L13.90 8.56 L12.90 8.56 L12.40 7.33 L12.40 7.33 L11.09 7.51 L10.59 6.65 L11.40 5.60 L11.40 5.60 L10.59 4.55 L11.09 3.69 L12.40 3.87 Z M14.30 5.60 A0.9 0.9 0 1 0 12.50 5.60 A0.9 0.9 0 1 0 14.30 5.60 Z" fill="#9aa4b2" fill-rule="evenodd"/><path d="M6.75 7.24 L7.57 5.17 L9.23 5.17 L10.05 7.24 L10.05 7.24 L12.25 6.91 L13.09 8.36 L11.70 10.10 L11.70 10.10 L13.09 11.84 L12.25 13.29 L10.05 12.96 L10.05 12.96 L9.23 15.03 L7.57 15.03 L6.75 12.96 L6.75 12.96 L4.55 13.29 L3.71 11.84 L5.10 10.10 L5.10 10.10 L3.71 8.36 L4.55 6.91 L6.75 7.24 Z M9.95 10.10 A1.55 1.55 0 1 0 6.85 10.10 A1.55 1.55 0 1 0 9.95 10.10 Z" fill="#6b7789" fill-rule="evenodd" stroke="#dce2eb" stroke-width="1.1" paint-order="stroke"/></svg><svg style="position:absolute;left:56.90px;top:649.96px" width="21" height="21" viewBox="-10.5 -10.5 21 21"><circle r="10.5" fill="#e5584b"/><use href="#bc"/></svg><div class="t" style="left:84.80px;top:655.44px;font-size:11.25px;line-height:11.25px;color:#2f6fd6;font-weight:700;">F378</div><div class="t" style="left:133.50px;top:654.72px;font-size:12.1px;line-height:12.1px;color:#383e47;font-weight:400;">Dynamic Macros</div><div class="t" style="left:186.40px;width:600px;text-align:center;top:654.72px;font-size:12.1px;line-height:12.1px;color:#383e47;font-weight:400;">M</div><div style="position:absolute;left:12px;top:687px;width:508px;height:3px;background:#2e6bd6;"></div><div style="position:absolute;left:12px;top:703.0px;width:508px;height:26.8px;background:#ffffff;"></div><svg style="position:absolute;left:33.00px;top:706.00px" width="20" height="20" viewBox="0 0 20 20"><path d="M12.40 3.87 L12.90 2.64 L13.90 2.64 L14.40 3.87 L14.40 3.87 L15.71 3.69 L16.21 4.55 L15.40 5.60 L15.40 5.60 L16.21 6.65 L15.71 7.51 L14.40 7.33 L14.40 7.33 L13.90 8.56 L12.90 8.56 L12.40 7.33 L12.40 7.33 L11.09 7.51 L10.59 6.65 L11.40 5.60 L11.40 5.60 L10.59 4.55 L11.09 3.69 L12.40 3.87 Z M14.30 5.60 A0.9 0.9 0 1 0 12.50 5.60 A0.9 0.9 0 1 0 14.30 5.60 Z" fill="#9aa4b2" fill-rule="evenodd"/><path d="M6.75 7.24 L7.57 5.17 L9.23 5.17 L10.05 7.24 L10.05 7.24 L12.25 6.91 L13.09 8.36 L11.70 10.10 L11.70 10.10 L13.09 11.84 L12.25 13.29 L10.05 12.96 L10.05 12.96 L9.23 15.03 L7.57 15.03 L6.75 12.96 L6.75 12.96 L4.55 13.29 L3.71 11.84 L5.10 10.10 L5.10 10.10 L3.71 8.36 L4.55 6.91 L6.75 7.24 Z M9.95 10.10 A1.55 1.55 0 1 0 6.85 10.10 A1.55 1.55 0 1 0 9.95 10.10 Z" fill="#6b7789" fill-rule="evenodd" stroke="#ffffff" stroke-width="1.1" paint-order="stroke"/></svg><svg style="position:absolute;left:56.90px;top:706.00px" width="21" height="21" viewBox="-10.5 -10.5 21 21"><circle r="10.5" fill="#3b9d26"/><use href="#bc"/></svg><div class="t" style="left:84.80px;top:711.48px;font-size:11.25px;line-height:11.25px;color:#2f6fd6;font-weight:700;">F26</div><div class="t" style="left:133.50px;top:710.76px;font-size:12.1px;line-height:12.1px;color:#383e47;font-weight:400;">APIs</div><div style="position:absolute;left:12px;top:731.64px;width:508px;height:26.8px;background:#ffffff;"></div><div style="position:absolute;left:32px;top:731.64px;width:22px;height:26.8px;background:#dce2eb;"></div><svg style="position:absolute;left:33.00px;top:734.64px" width="20" height="20" viewBox="0 0 20 20"><path d="M12.40 3.87 L12.90 2.64 L13.90 2.64 L14.40 3.87 L14.40 3.87 L15.71 3.69 L16.21 4.55 L15.40 5.60 L15.40 5.60 L16.21 6.65 L15.71 7.51 L14.40 7.33 L14.40 7.33 L13.90 8.56 L12.90 8.56 L12.40 7.33 L12.40 7.33 L11.09 7.51 L10.59 6.65 L11.40 5.60 L11.40 5.60 L10.59 4.55 L11.09 3.69 L12.40 3.87 Z M14.30 5.60 A0.9 0.9 0 1 0 12.50 5.60 A0.9 0.9 0 1 0 14.30 5.60 Z" fill="#9aa4b2" fill-rule="evenodd"/><path d="M6.75 7.24 L7.57 5.17 L9.23 5.17 L10.05 7.24 L10.05 7.24 L12.25 6.91 L13.09 8.36 L11.70 10.10 L11.70 10.10 L13.09 11.84 L12.25 13.29 L10.05 12.96 L10.05 12.96 L9.23 15.03 L7.57 15.03 L6.75 12.96 L6.75 12.96 L4.55 13.29 L3.71 11.84 L5.10 10.10 L5.10 10.10 L3.71 8.36 L4.55 6.91 L6.75 7.24 Z M9.95 10.10 A1.55 1.55 0 1 0 6.85 10.10 A1.55 1.55 0 1 0 9.95 10.10 Z" fill="#6b7789" fill-rule="evenodd" stroke="#dce2eb" stroke-width="1.1" paint-order="stroke"/></svg><svg style="position:absolute;left:56.90px;top:734.64px" width="21" height="21" viewBox="-10.5 -10.5 21 21"><circle r="10.5" fill="#908675"/><use href="#bc"/></svg><div class="t" style="left:84.80px;top:740.12px;font-size:11.25px;line-height:11.25px;color:#2f6fd6;font-weight:700;">F28</div><div class="t" style="left:133.50px;top:739.40px;font-size:12.1px;line-height:12.1px;color:#383e47;font-weight:400;">OneTouch Purchase</div><div class="t" style="left:186.40px;width:600px;text-align:center;top:739.40px;font-size:12.1px;line-height:12.1px;color:#383e47;font-weight:400;">M</div><div style="position:absolute;left:12px;top:760.28px;width:508px;height:26.8px;background:#ffffff;"></div><div style="position:absolute;left:32px;top:760.28px;width:22px;height:26.8px;background:#dce2eb;"></div><svg style="position:absolute;left:33.00px;top:763.28px" width="20" height="20" viewBox="0 0 20 20"><path d="M12.40 3.87 L12.90 2.64 L13.90 2.64 L14.40 3.87 L14.40 3.87 L15.71 3.69 L16.21 4.55 L15.40 5.60 L15.40 5.60 L16.21 6.65 L15.71 7.51 L14.40 7.33 L14.40 7.33 L13.90 8.56 L12.90 8.56 L12.40 7.33 L12.40 7.33 L11.09 7.51 L10.59 6.65 L11.40 5.60 L11.40 5.60 L10.59 4.55 L11.09 3.69 L12.40 3.87 Z M14.30 5.60 A0.9 0.9 0 1 0 12.50 5.60 A0.9 0.9 0 1 0 14.30 5.60 Z" fill="#9aa4b2" fill-rule="evenodd"/><path d="M6.75 7.24 L7.57 5.17 L9.23 5.17 L10.05 7.24 L10.05 7.24 L12.25 6.91 L13.09 8.36 L11.70 10.10 L11.70 10.10 L13.09 11.84 L12.25 13.29 L10.05 12.96 L10.05 12.96 L9.23 15.03 L7.57 15.03 L6.75 12.96 L6.75 12.96 L4.55 13.29 L3.71 11.84 L5.10 10.10 L5.10 10.10 L3.71 8.36 L4.55 6.91 L6.75 7.24 Z M9.95 10.10 A1.55 1.55 0 1 0 6.85 10.10 A1.55 1.55 0 1 0 9.95 10.10 Z" fill="#6b7789" fill-rule="evenodd" stroke="#dce2eb" stroke-width="1.1" paint-order="stroke"/></svg><svg style="position:absolute;left:56.90px;top:763.28px" width="21" height="21" viewBox="-10.5 -10.5 21 21"><circle r="10.5" fill="#908675"/><use href="#bc"/></svg><div class="t" style="left:84.80px;top:768.76px;font-size:11.25px;line-height:11.25px;color:#2f6fd6;font-weight:700;">F29</div><div class="t" style="left:133.50px;top:768.04px;font-size:12.1px;line-height:12.1px;color:#383e47;font-weight:400;">Order Processing</div><div style="position:absolute;left:12px;top:788.92px;width:508px;height:26.8px;background:#ffffff;"></div><svg style="position:absolute;left:33.00px;top:791.92px" width="20" height="20" viewBox="0 0 20 20"><path d="M12.40 3.87 L12.90 2.64 L13.90 2.64 L14.40 3.87 L14.40 3.87 L15.71 3.69 L16.21 4.55 L15.40 5.60 L15.40 5.60 L16.21 6.65 L15.71 7.51 L14.40 7.33 L14.40 7.33 L13.90 8.56 L12.90 8.56 L12.40 7.33 L12.40 7.33 L11.09 7.51 L10.59 6.65 L11.40 5.60 L11.40 5.60 L10.59 4.55 L11.09 3.69 L12.40 3.87 Z M14.30 5.60 A0.9 0.9 0 1 0 12.50 5.60 A0.9 0.9 0 1 0 14.30 5.60 Z" fill="#9aa4b2" fill-rule="evenodd"/><path d="M6.75 7.24 L7.57 5.17 L9.23 5.17 L10.05 7.24 L10.05 7.24 L12.25 6.91 L13.09 8.36 L11.70 10.10 L11.70 10.10 L13.09 11.84 L12.25 13.29 L10.05 12.96 L10.05 12.96 L9.23 15.03 L7.57 15.03 L6.75 12.96 L6.75 12.96 L4.55 13.29 L3.71 11.84 L5.10 10.10 L5.10 10.10 L3.71 8.36 L4.55 6.91 L6.75 7.24 Z M9.95 10.10 A1.55 1.55 0 1 0 6.85 10.10 A1.55 1.55 0 1 0 9.95 10.10 Z" fill="#6b7789" fill-rule="evenodd" stroke="#ffffff" stroke-width="1.1" paint-order="stroke"/></svg><svg style="position:absolute;left:56.90px;top:791.92px" width="21" height="21" viewBox="-10.5 -10.5 21 21"><circle r="10.5" fill="#908675"/><use href="#bc"/></svg><div class="t" style="left:84.80px;top:797.40px;font-size:11.25px;line-height:11.25px;color:#2f6fd6;font-weight:700;">F31</div><div class="t" style="left:133.50px;top:796.68px;font-size:12.1px;line-height:12.1px;color:#383e47;font-weight:400;">Order Confirmation</div><div class="t" style="left:186.40px;width:600px;text-align:center;top:796.68px;font-size:12.1px;line-height:12.1px;color:#383e47;font-weight:400;">S</div><div style="position:absolute;left:12px;top:817.56px;width:508px;height:26.8px;background:#ffffff;"></div><svg style="position:absolute;left:33.00px;top:820.56px" width="20" height="20" viewBox="0 0 20 20"><path d="M12.40 3.87 L12.90 2.64 L13.90 2.64 L14.40 3.87 L14.40 3.87 L15.71 3.69 L16.21 4.55 L15.40 5.60 L15.40 5.60 L16.21 6.65 L15.71 7.51 L14.40 7.33 L14.40 7.33 L13.90 8.56 L12.90 8.56 L12.40 7.33 L12.40 7.33 L11.09 7.51 L10.59 6.65 L11.40 5.60 L11.40 5.60 L10.59 4.55 L11.09 3.69 L12.40 3.87 Z M14.30 5.60 A0.9 0.9 0 1 0 12.50 5.60 A0.9 0.9 0 1 0 14.30 5.60 Z" fill="#9aa4b2" fill-rule="evenodd"/><path d="M6.75 7.24 L7.57 5.17 L9.23 5.17 L10.05 7.24 L10.05 7.24 L12.25 6.91 L13.09 8.36 L11.70 10.10 L11.70 10.10 L13.09 11.84 L12.25 13.29 L10.05 12.96 L10.05 12.96 L9.23 15.03 L7.57 15.03 L6.75 12.96 L6.75 12.96 L4.55 13.29 L3.71 11.84 L5.10 10.10 L5.10 10.10 L3.71 8.36 L4.55 6.91 L6.75 7.24 Z M9.95 10.10 A1.55 1.55 0 1 0 6.85 10.10 A1.55 1.55 0 1 0 9.95 10.10 Z" fill="#6b7789" fill-rule="evenodd" stroke="#ffffff" stroke-width="1.1" paint-order="stroke"/></svg><svg style="position:absolute;left:56.90px;top:820.56px" width="21" height="21" viewBox="-10.5 -10.5 21 21"><circle r="10.5" fill="#e5584b"/><use href="#bc"/></svg><div class="t" style="left:84.80px;top:826.04px;font-size:11.25px;line-height:11.25px;color:#2f6fd6;font-weight:700;">F472</div><div class="t" style="left:133.50px;top:825.32px;font-size:12.1px;line-height:12.1px;color:#383e47;font-weight:400;">Autonomous Car Feature</div><div class="t" style="left:186.40px;width:600px;text-align:center;top:825.32px;font-size:12.1px;line-height:12.1px;color:#383e47;font-weight:400;">M</div><div style="position:absolute;left:12px;top:846.2px;width:508px;height:26.8px;background:#ffffff;"></div><svg style="position:absolute;left:33.00px;top:849.20px" width="20" height="20" viewBox="0 0 20 20"><path d="M12.40 3.87 L12.90 2.64 L13.90 2.64 L14.40 3.87 L14.40 3.87 L15.71 3.69 L16.21 4.55 L15.40 5.60 L15.40 5.60 L16.21 6.65 L15.71 7.51 L14.40 7.33 L14.40 7.33 L13.90 8.56 L12.90 8.56 L12.40 7.33 L12.40 7.33 L11.09 7.51 L10.59 6.65 L11.40 5.60 L11.40 5.60 L10.59 4.55 L11.09 3.69 L12.40 3.87 Z M14.30 5.60 A0.9 0.9 0 1 0 12.50 5.60 A0.9 0.9 0 1 0 14.30 5.60 Z" fill="#9aa4b2" fill-rule="evenodd"/><path d="M6.75 7.24 L7.57 5.17 L9.23 5.17 L10.05 7.24 L10.05 7.24 L12.25 6.91 L13.09 8.36 L11.70 10.10 L11.70 10.10 L13.09 11.84 L12.25 13.29 L10.05 12.96 L10.05 12.96 L9.23 15.03 L7.57 15.03 L6.75 12.96 L6.75 12.96 L4.55 13.29 L3.71 11.84 L5.10 10.10 L5.10 10.10 L3.71 8.36 L4.55 6.91 L6.75 7.24 Z M9.95 10.10 A1.55 1.55 0 1 0 6.85 10.10 A1.55 1.55 0 1 0 9.95 10.10 Z" fill="#6b7789" fill-rule="evenodd" stroke="#ffffff" stroke-width="1.1" paint-order="stroke"/></svg><svg style="position:absolute;left:56.90px;top:849.20px" width="21" height="21" viewBox="-10.5 -10.5 21 21"><circle r="10.5" fill="#e5584b"/><use href="#bc"/></svg><div class="t" style="left:84.80px;top:854.68px;font-size:11.25px;line-height:11.25px;color:#2f6fd6;font-weight:700;">F152</div><div class="t" style="left:133.50px;top:853.96px;font-size:12.1px;line-height:12.1px;color:#383e47;font-weight:400;">Personalized Abigail Commands</div><div class="t" style="left:186.40px;width:600px;text-align:center;top:853.96px;font-size:12.1px;line-height:12.1px;color:#383e47;font-weight:400;">L</div><div class="t" style="left:540.00px;top:173.50px;font-size:14.3px;line-height:14.3px;color:#22272e;font-weight:400;">Group Allocations</div><div style="position:absolute;left:658px;top:172.5px;width:47px;height:17.5px;border-radius:9px;background:#dde3ec;box-shadow:0 0 0 1px #fff"></div><div class="t" style="left:380.50px;width:600px;text-align:center;top:175.52px;font-size:11.2px;line-height:11.2px;color:#6b7789;font-weight:400;">Draft</div><div style="position:absolute;left:1359px;top:168px;width:85px;height:24.5px;border:1px solid #cdd6e2;border-radius:3px;background:#fff"></div><div class="t" style="left:1102.50px;width:600px;text-align:center;top:175.26px;font-size:12.1px;line-height:12.1px;color:#2f6fd6;font-weight:400;">Select Teams</div><div style="position:absolute;left:1452px;top:168px;width:67px;height:24.5px;border:1px solid #cdd6e2;border-radius:3px;background:#fff"></div><div class="t" style="left:1186.50px;width:600px;text-align:center;top:175.26px;font-size:12.1px;line-height:12.1px;color:#2f6fd6;font-weight:400;">Summary</div><div style="position:absolute;left:1527.5px;top:168px;width:55.5px;height:26.5px;border-radius:3px;background:#2f6fd6"></div><div class="t" style="left:1255.25px;width:600px;text-align:center;top:175.26px;font-size:12.1px;line-height:12.1px;color:#ffffff;font-weight:400;">Publish</div><div style="position:absolute;left:540px;top:209px;width:1043px;height:28px;background:#6d7987;"></div><div class="t" style="left:570.00px;top:217.84px;font-size:12px;line-height:12px;color:#ffffff;font-weight:700;">Group</div><div class="t" style="left:739.00px;top:217.84px;font-size:12px;line-height:12px;color:#ffffff;font-weight:700;">Capacity</div><div style="position:absolute;left:540px;top:244px;width:1043px;height:41.5px;background:#e9edf5;"></div><svg style="position:absolute;left:553px;top:261px;" width="6" height="9" viewBox="0 0 6 9"><polyline points="0.9,0.9 5,4.5 0.9,8.1" fill="none" stroke="#2f6fd6" stroke-width="1.7" stroke-linecap="round" stroke-linejoin="round"/></svg><div class="t" style="left:573.00px;top:259.59px;font-size:12.3px;line-height:12.3px;color:#4b5563;font-weight:400;">I - Team Orion</div><div style="position:absolute;left:743px;top:256.25px;width:45px;height:16px;border:1px solid #c9d3e1;background:#fff"></div><div class="t" style="left:466.50px;width:600px;text-align:center;top:259.76px;font-size:12.1px;line-height:12.1px;color:#2c323b;font-weight:400;">100</div><div style="position:absolute;left:828px;top:258px;width:314px;height:13px;border-radius:6px;background:#fff"></div><div style="position:absolute;left:836px;top:261px;width:241.00px;height:7px;border-radius:2px;background:#dfd629;box-shadow:inset 0 -1.5px 0 rgba(0,0,0,0.08)"></div><div style="position:absolute;left:1078px;top:261px;width:14.50px;height:7px;border-radius:2px;background:#3b9d26;box-shadow:inset 0 -1.5px 0 rgba(0,0,0,0.08)"></div><div class="t" style="left:1167.50px;top:257.96px;font-size:15.4px;line-height:15.4px;color:#50bf7b;font-weight:700;-webkit-text-stroke:0.35px #50bf7b;">85%</div><div style="position:absolute;left:540px;top:290.7px;width:1043px;height:41.5px;background:#e9edf5;"></div><svg style="position:absolute;left:553px;top:307.7px;" width="6" height="9" viewBox="0 0 6 9"><polyline points="0.9,0.9 5,4.5 0.9,8.1" fill="none" stroke="#2f6fd6" stroke-width="1.7" stroke-linecap="round" stroke-linejoin="round"/></svg><div class="t" style="left:573.00px;top:306.29px;font-size:12.3px;line-height:12.3px;color:#4b5563;font-weight:400;">II - Team Scorpious</div><div style="position:absolute;left:743px;top:302.95px;width:45px;height:16px;border:1px solid #c9d3e1;background:#fff"></div><div class="t" style="left:466.50px;width:600px;text-align:center;top:306.46px;font-size:12.1px;line-height:12.1px;color:#2c323b;font-weight:400;">100</div><div style="position:absolute;left:828px;top:304.7px;width:314px;height:13px;border-radius:6px;background:#fff"></div><div style="position:absolute;left:836px;top:307.7px;width:150.00px;height:7px;border-radius:2px;background:#dfd629;box-shadow:inset 0 -1.5px 0 rgba(0,0,0,0.08)"></div><div style="position:absolute;left:988px;top:307.7px;width:15.00px;height:7px;border-radius:2px;background:#dfd629;box-shadow:inset 0 -1.5px 0 rgba(0,0,0,0.08)"></div><div style="position:absolute;left:1005px;top:307.7px;width:8.00px;height:7px;border-radius:2px;background:#908675;box-shadow:inset 0 -1.5px 0 rgba(0,0,0,0.08)"></div><div style="position:absolute;left:1015px;top:307.7px;width:9.00px;height:7px;border-radius:2px;background:#908675;box-shadow:inset 0 -1.5px 0 rgba(0,0,0,0.08)"></div><div class="t" style="left:1167.50px;top:304.66px;font-size:15.4px;line-height:15.4px;color:#50bf7b;font-weight:700;-webkit-text-stroke:0.35px #50bf7b;">61%</div><div style="position:absolute;left:540px;top:337px;width:1043px;height:41.5px;background:#e9edf5;"></div><svg style="position:absolute;left:551px;top:354px;" width="10" height="6" viewBox="0 0 10 6"><polyline points="0.85,0.85 5.0,5.15 9.15,0.85" fill="none" stroke="#2f6fd6" stroke-width="1.7" stroke-linecap="round" stroke-linejoin="round"/></svg><div class="t" style="left:573.00px;top:351.59px;font-size:12.3px;line-height:12.3px;color:#4b5563;font-weight:400;">IX - Pegasus</div><div style="position:absolute;left:743px;top:348.25px;width:45px;height:16px;border:1px solid #c9d3e1;background:#fff"></div><div class="t" style="left:466.50px;width:600px;text-align:center;top:351.76px;font-size:12.1px;line-height:12.1px;color:#2c323b;font-weight:400;">100</div><div style="position:absolute;left:828px;top:350px;width:314px;height:13px;border-radius:6px;background:#fff"></div><div style="position:absolute;left:836px;top:353px;width:24.50px;height:7px;border-radius:2px;background:#3b9d26;box-shadow:inset 0 -1.5px 0 rgba(0,0,0,0.08)"></div><div style="position:absolute;left:862.5px;top:353px;width:17.50px;height:7px;border-radius:2px;background:#908675;box-shadow:inset 0 -1.5px 0 rgba(0,0,0,0.08)"></div><div style="position:absolute;left:882px;top:353px;width:23.00px;height:7px;border-radius:2px;background:#908675;box-shadow:inset 0 -1.5px 0 rgba(0,0,0,0.08)"></div><div style="position:absolute;left:907px;top:353px;width:135.00px;height:7px;border-radius:2px;background:#e5584b;box-shadow:inset 0 -1.5px 0 rgba(0,0,0,0.08)"></div><div class="t" style="left:1167.50px;top:349.96px;font-size:15.4px;line-height:15.4px;color:#50bf7b;font-weight:700;-webkit-text-stroke:0.35px #50bf7b;">67%</div><div style="position:absolute;left:540px;top:377.5px;width:1043px;height:32.5px;background:#ffffff;"></div><div style="position:absolute;left:540px;top:410px;width:1043px;height:1.5px;background:#cfdae7;"></div><div class="t" style="left:543.50px;top:395.70px;font-size:10.4px;line-height:10.4px;color:#2b313b;font-weight:700;">ID</div><div class="t" style="left:645.00px;top:395.70px;font-size:10.4px;line-height:10.4px;color:#2b313b;font-weight:700;">Name</div><div class="t" style="left:1165.50px;top:395.70px;font-size:10.4px;line-height:10.4px;color:#2b313b;font-weight:700;">Dependencies</div><div class="t" style="left:1249.00px;top:383.00px;font-size:10.4px;line-height:10.4px;color:#2b313b;font-weight:700;">Leaf Story</div><div class="t" style="left:1249.00px;top:395.70px;font-size:10.4px;line-height:10.4px;color:#2b313b;font-weight:700;">Rollup</div><div class="t" style="left:1333.50px;top:395.70px;font-size:10.4px;line-height:10.4px;color:#2b313b;font-weight:700;">Group Est</div><div class="t" style="left:1409.00px;top:395.70px;font-size:10.4px;line-height:10.4px;color:#2b313b;font-weight:700;">Prelim Est</div><div class="t" style="left:1477.00px;top:395.70px;font-size:10.4px;line-height:10.4px;color:#2b313b;font-weight:700;">Refined Est</div><div style="position:absolute;left:540px;top:418.0px;width:1043px;height:28.3px;background:#ffffff;"></div><svg style="position:absolute;left:550.35px;top:422.15px" width="20.5" height="20.5" viewBox="-10.5 -10.5 21 21"><circle r="10.5" fill="#3b9d26"/><use href="#bc"/></svg><div class="t" style="left:578.00px;top:427.48px;font-size:11.25px;line-height:11.25px;color:#2f6fd6;font-weight:700;">F20</div><div class="t" style="left:645.00px;top:426.76px;font-size:12.1px;line-height:12.1px;color:#383e47;font-weight:400;">Self Service 2.0</div><div class="t" style="left:903.40px;width:600px;text-align:center;top:426.76px;font-size:12.1px;line-height:12.1px;color:#383e47;font-weight:400;">0</div><div class="t" style="left:987.80px;width:600px;text-align:center;top:426.76px;font-size:12.1px;line-height:12.1px;color:#383e47;font-weight:400;">34 Points (4)</div><div class="t" style="left:1068.00px;width:600px;text-align:center;top:426.76px;font-size:12.1px;line-height:12.1px;color:#383e47;font-weight:400;">8</div><div class="t" style="left:1139.70px;width:600px;text-align:center;top:426.76px;font-size:12.1px;line-height:12.1px;color:#383e47;font-weight:400;">L</div><div class="t" style="left:1210.80px;width:600px;text-align:center;top:426.76px;font-size:12.1px;line-height:12.1px;color:#383e47;font-weight:400;">0</div><svg style="position:absolute;left:1557px;top:426.6px;" width="11.5" height="11.5" viewBox="0 0 11.5 11.5"><circle cx="5.75" cy="5.75" r="5.75" fill="#2f6fd6"/><path d="M3.6 3.6 L7.9 7.9 M7.9 3.6 L3.6 7.9" stroke="#fff" stroke-width="1.4" stroke-linecap="round"/></svg><div style="position:absolute;left:540px;top:448.35px;width:1043px;height:28.3px;background:#ffffff;"></div><svg style="position:absolute;left:550.35px;top:452.50px" width="20.5" height="20.5" viewBox="-10.5 -10.5 21 21"><circle r="10.5" fill="#908675"/><use href="#bc"/></svg><div class="t" style="left:578.00px;top:457.83px;font-size:11.25px;line-height:11.25px;color:#2f6fd6;font-weight:700;">F21</div><div class="t" style="left:645.00px;top:457.11px;font-size:12.1px;line-height:12.1px;color:#383e47;font-weight:400;">Add error message if credit card number length is &lt; 16</div><div class="t" style="left:903.40px;width:600px;text-align:center;top:457.11px;font-size:12.1px;line-height:12.1px;color:#383e47;font-weight:400;">0</div><div class="t" style="left:987.80px;width:600px;text-align:center;top:457.11px;font-size:12.1px;line-height:12.1px;color:#383e47;font-weight:400;">0 Points (0)</div><div class="t" style="left:1068.00px;width:600px;text-align:center;top:457.11px;font-size:12.1px;line-height:12.1px;color:#383e47;font-weight:400;">6</div><div class="t" style="left:1139.70px;width:600px;text-align:center;top:457.11px;font-size:12.1px;line-height:12.1px;color:#383e47;font-weight:400;">M</div><div class="t" style="left:1210.80px;width:600px;text-align:center;top:457.11px;font-size:12.1px;line-height:12.1px;color:#383e47;font-weight:400;">0</div><svg style="position:absolute;left:1557px;top:456.95000000000005px;" width="11.5" height="11.5" viewBox="0 0 11.5 11.5"><circle cx="5.75" cy="5.75" r="5.75" fill="#2f6fd6"/><path d="M3.6 3.6 L7.9 7.9 M7.9 3.6 L3.6 7.9" stroke="#fff" stroke-width="1.4" stroke-linecap="round"/></svg><div style="position:absolute;left:540px;top:478.7px;width:1043px;height:28.3px;background:#ffffff;"></div><svg style="position:absolute;left:550.35px;top:482.85px" width="20.5" height="20.5" viewBox="-10.5 -10.5 21 21"><circle r="10.5" fill="#908675"/><use href="#bc"/></svg><div class="t" style="left:578.00px;top:488.18px;font-size:11.25px;line-height:11.25px;color:#2f6fd6;font-weight:700;">F22</div><div class="t" style="left:645.00px;top:487.46px;font-size:12.1px;line-height:12.1px;color:#383e47;font-weight:400;">Service-Level Agreements</div><div class="t" style="left:903.40px;width:600px;text-align:center;top:487.46px;font-size:12.1px;line-height:12.1px;color:#383e47;font-weight:400;">0</div><div class="t" style="left:987.80px;width:600px;text-align:center;top:487.46px;font-size:12.1px;line-height:12.1px;color:#383e47;font-weight:400;">2 Points (15)</div><div class="t" style="left:1068.00px;width:600px;text-align:center;top:487.46px;font-size:12.1px;line-height:12.1px;color:#383e47;font-weight:400;">8</div><div class="t" style="left:1139.70px;width:600px;text-align:center;top:487.46px;font-size:12.1px;line-height:12.1px;color:#383e47;font-weight:400;">XL</div><div class="t" style="left:1210.80px;width:600px;text-align:center;top:487.46px;font-size:12.1px;line-height:12.1px;color:#383e47;font-weight:400;">0</div><svg style="position:absolute;left:1557px;top:487.3px;" width="11.5" height="11.5" viewBox="0 0 11.5 11.5"><circle cx="5.75" cy="5.75" r="5.75" fill="#2f6fd6"/><path d="M3.6 3.6 L7.9 7.9 M7.9 3.6 L3.6 7.9" stroke="#fff" stroke-width="1.4" stroke-linecap="round"/></svg><div style="position:absolute;left:540px;top:509.05px;width:1043px;height:28.3px;background:#ffffff;"></div><svg style="position:absolute;left:550.35px;top:513.20px" width="20.5" height="20.5" viewBox="-10.5 -10.5 21 21"><circle r="10.5" fill="#e5584b"/><use href="#bc"/></svg><div class="t" style="left:578.00px;top:518.53px;font-size:11.25px;line-height:11.25px;color:#2f6fd6;font-weight:700;">F159</div><div class="t" style="left:645.00px;top:517.81px;font-size:12.1px;line-height:12.1px;color:#383e47;font-weight:400;">Internet Explorer</div><div class="t" style="left:903.40px;width:600px;text-align:center;top:517.81px;font-size:12.1px;line-height:12.1px;color:#383e47;font-weight:400;">2</div><div class="t" style="left:987.80px;width:600px;text-align:center;top:517.81px;font-size:12.1px;line-height:12.1px;color:#383e47;font-weight:400;">0 Points (0)</div><div class="t" style="left:1139.70px;width:600px;text-align:center;top:517.81px;font-size:12.1px;line-height:12.1px;color:#383e47;font-weight:400;">M</div><div class="t" style="left:1210.80px;width:600px;text-align:center;top:517.81px;font-size:12.1px;line-height:12.1px;color:#383e47;font-weight:400;">45</div><svg style="position:absolute;left:1557px;top:517.65px;" width="11.5" height="11.5" viewBox="0 0 11.5 11.5"><circle cx="5.75" cy="5.75" r="5.75" fill="#2f6fd6"/><path d="M3.6 3.6 L7.9 7.9 M7.9 3.6 L3.6 7.9" stroke="#fff" stroke-width="1.4" stroke-linecap="round"/></svg><div style="position:absolute;left:540px;top:542.3px;width:1043px;height:41.5px;background:#e9edf5;"></div><svg style="position:absolute;left:553px;top:559.3px;" width="6" height="9" viewBox="0 0 6 9"><polyline points="0.9,0.9 5,4.5 0.9,8.1" fill="none" stroke="#2f6fd6" stroke-width="1.7" stroke-linecap="round" stroke-linejoin="round"/></svg><div class="t" style="left:573.00px;top:557.89px;font-size:12.3px;line-height:12.3px;color:#4b5563;font-weight:400;">Milky Way</div><div style="position:absolute;left:743px;top:554.55px;width:45px;height:16px;border:1px solid #c9d3e1;background:#fff"></div><div class="t" style="left:466.50px;width:600px;text-align:center;top:558.06px;font-size:12.1px;line-height:12.1px;color:#2c323b;font-weight:400;">75</div><div style="position:absolute;left:828px;top:556.3px;width:314px;height:13px;border-radius:6px;background:#fff"></div><div style="position:absolute;left:836px;top:559.3px;width:20.40px;height:7px;border-radius:2px;background:#dfd629;box-shadow:inset 0 -1.5px 0 rgba(0,0,0,0.08)"></div><div style="position:absolute;left:858px;top:559.3px;width:8.00px;height:7px;border-radius:2px;background:#908675;box-shadow:inset 0 -1.5px 0 rgba(0,0,0,0.08)"></div><div style="position:absolute;left:867.6px;top:559.3px;width:219.80px;height:7px;border-radius:2px;background:#908675;box-shadow:inset 0 -1.5px 0 rgba(0,0,0,0.08)"></div><div class="t" style="left:1167.50px;top:556.26px;font-size:15.4px;line-height:15.4px;color:#50bf7b;font-weight:700;-webkit-text-stroke:0.35px #50bf7b;">83%</div><div style="position:absolute;left:540px;top:589.1px;width:1043px;height:41.5px;background:#e9edf5;"></div><svg style="position:absolute;left:553px;top:606.1px;" width="6" height="9" viewBox="0 0 6 9"><polyline points="0.9,0.9 5,4.5 0.9,8.1" fill="none" stroke="#2f6fd6" stroke-width="1.7" stroke-linecap="round" stroke-linejoin="round"/></svg><div class="t" style="left:573.00px;top:604.69px;font-size:12.3px;line-height:12.3px;color:#4b5563;font-weight:400;">VI - Team Leo</div><div style="position:absolute;left:743px;top:601.35px;width:45px;height:16px;border:1px solid #c9d3e1;background:#fff"></div><div class="t" style="left:466.50px;width:600px;text-align:center;top:604.86px;font-size:12.1px;line-height:12.1px;color:#2c323b;font-weight:400;">100</div><div style="position:absolute;left:828px;top:603.1px;width:314px;height:13px;border-radius:6px;background:#fff"></div><div style="position:absolute;left:836px;top:606.1px;width:9.50px;height:7px;border-radius:2px;background:#dfd629;box-shadow:inset 0 -1.5px 0 rgba(0,0,0,0.08)"></div><div style="position:absolute;left:847.1px;top:606.1px;width:15.10px;height:7px;border-radius:2px;background:#dfd629;box-shadow:inset 0 -1.5px 0 rgba(0,0,0,0.08)"></div><div style="position:absolute;left:864.1px;top:606.1px;width:11.90px;height:7px;border-radius:2px;background:#3b9d26;box-shadow:inset 0 -1.5px 0 rgba(0,0,0,0.08)"></div><div style="position:absolute;left:877.75px;top:606.1px;width:150.25px;height:7px;border-radius:2px;background:#3b9d26;box-shadow:inset 0 -1.5px 0 rgba(0,0,0,0.08)"></div><div style="position:absolute;left:1029.3px;top:606.1px;width:17.70px;height:7px;border-radius:2px;background:#e5584b;box-shadow:inset 0 -1.5px 0 rgba(0,0,0,0.08)"></div><div class="t" style="left:1167.50px;top:603.06px;font-size:15.4px;line-height:15.4px;color:#50bf7b;font-weight:700;-webkit-text-stroke:0.35px #50bf7b;">68%</div><div style="position:absolute;left:540px;top:635.5px;width:1043px;height:41.5px;background:#e9edf5;"></div><svg style="position:absolute;left:553px;top:652.5px;" width="6" height="9" viewBox="0 0 6 9"><polyline points="0.9,0.9 5,4.5 0.9,8.1" fill="none" stroke="#2f6fd6" stroke-width="1.7" stroke-linecap="round" stroke-linejoin="round"/></svg><div class="t" style="left:573.00px;top:651.09px;font-size:12.3px;line-height:12.3px;color:#4b5563;font-weight:400;">VIII - Team Norma</div><div style="position:absolute;left:743px;top:647.75px;width:45px;height:16px;border:1px solid #c9d3e1;background:#fff"></div><div class="t" style="left:466.50px;width:600px;text-align:center;top:651.26px;font-size:12.1px;line-height:12.1px;color:#2c323b;font-weight:400;">100</div><div style="position:absolute;left:828px;top:649.5px;width:314px;height:13px;border-radius:6px;background:#fff"></div><div style="position:absolute;left:836px;top:652.5px;width:150.00px;height:7px;border-radius:2px;background:#dfd629;box-shadow:inset 0 -1.5px 0 rgba(0,0,0,0.08)"></div><div style="position:absolute;left:988px;top:652.5px;width:15.00px;height:7px;border-radius:2px;background:#3b9d26;box-shadow:inset 0 -1.5px 0 rgba(0,0,0,0.08)"></div><div style="position:absolute;left:1005px;top:652.5px;width:8.00px;height:7px;border-radius:2px;background:#e5584b;box-shadow:inset 0 -1.5px 0 rgba(0,0,0,0.08)"></div><div class="t" style="left:1167.50px;top:649.46px;font-size:15.4px;line-height:15.4px;color:#50bf7b;font-weight:700;-webkit-text-stroke:0.35px #50bf7b;">58%</div>
</body></html>
